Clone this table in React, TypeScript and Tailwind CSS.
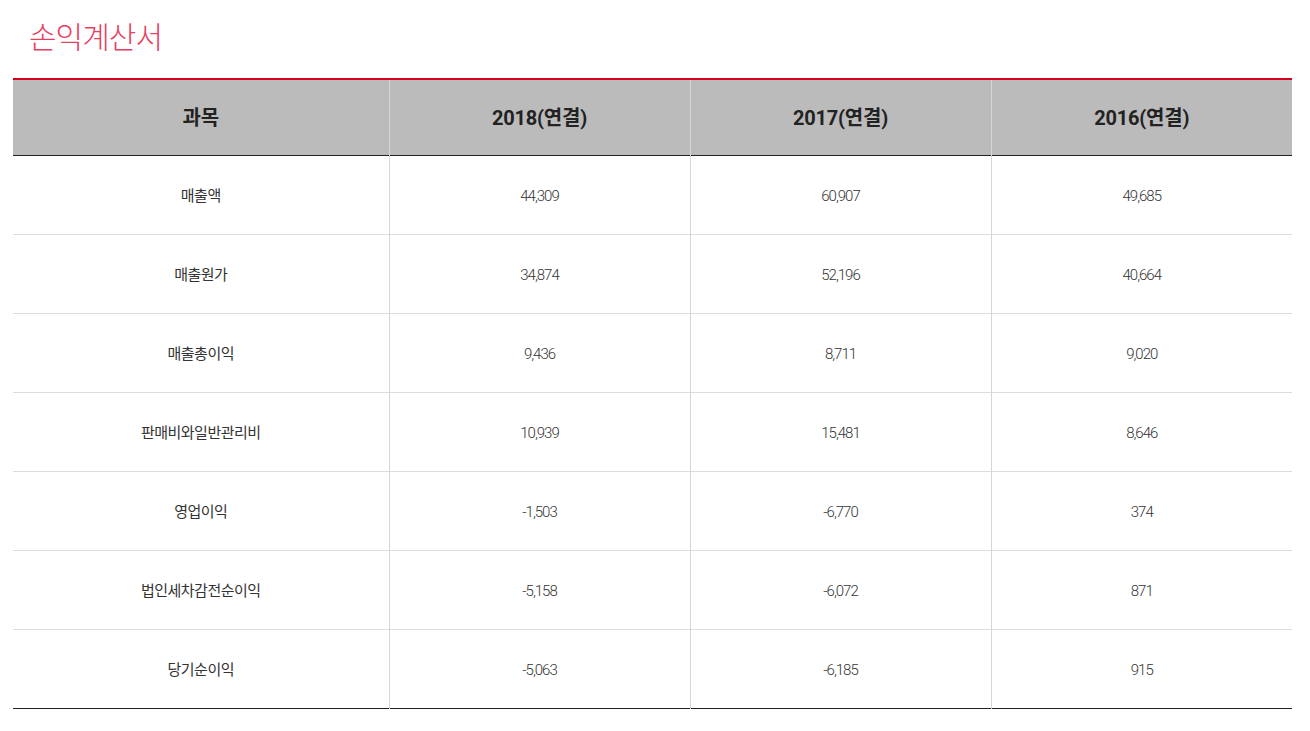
const rows: [string, string, string, string][] = [
  ["매출액", "44,309", "60,907", "49,685"],
  ["매출원가", "34,874", "52,196", "40,664"],
  ["매출총이익", "9,436", "8,711", "9,020"],
  ["판매비와일반관리비", "10,939", "15,481", "8,646"],
  ["영업이익", "-1,503", "-6,770", "374"],
  ["법인세차감전순이익", "-5,158", "-6,072", "871"],
  ["당기순이익", "-5,063", "-6,185", "915"],
];

const font = { fontFamily: '"Roboto", "Noto Sans CJK KR", sans-serif' };

export default function App() {
  return (
    <main className="min-h-screen bg-white px-[13px] pt-[18px]" style={font}>
      <h2 className="pl-[16px] text-[30px] font-light leading-[40px] tracking-[-1px] text-[#e8405f]">
        손익계산서
      </h2>
      <table className="mt-[20px] w-[1279px] table-fixed border-collapse border-t-2 border-t-[#d7001d] border-b border-b-[#222]">
        <colgroup>
          <col className="w-[376px]" />
          <col className="w-[301px]" />
          <col className="w-[301px]" />
          <col className="w-[301px]" />
        </colgroup>
        <thead>
          <tr className="h-[76px] bg-[#bbbbbb] border-b border-b-[#222]">
            {["과목", "2018(연결)", "2017(연결)", "2016(연결)"].map((h, i) => (
              <th
                key={h}
                className={`pt-[2px] text-center text-[20px] font-bold tracking-[-0.2px] text-[#222] ${
                  i > 0 ? "border-l border-l-[#d6d6d6]" : ""
                }`}
              >
                {h}
              </th>
            ))}
          </tr>
        </thead>
        <tbody>
          {rows.map((r, ri) => (
            <tr
              key={r[0]}
              className={`h-[79px] ${ri < rows.length - 1 ? "border-b border-b-[#dddddd]" : ""}`}
            >
              {r.map((c, i) => (
                <td
                  key={i}
                  className={`pt-[3px] text-center text-[15px] text-[#333] ${
                    i > 0
                      ? "border-l border-l-[#d6d6d6] font-light tracking-[-1px]"
                      : "tracking-[-0.5px]"
                  }`}
                >
                  {c}
                </td>
              ))}
            </tr>
          ))}
        </tbody>
      </table>
    </main>
  );
}
